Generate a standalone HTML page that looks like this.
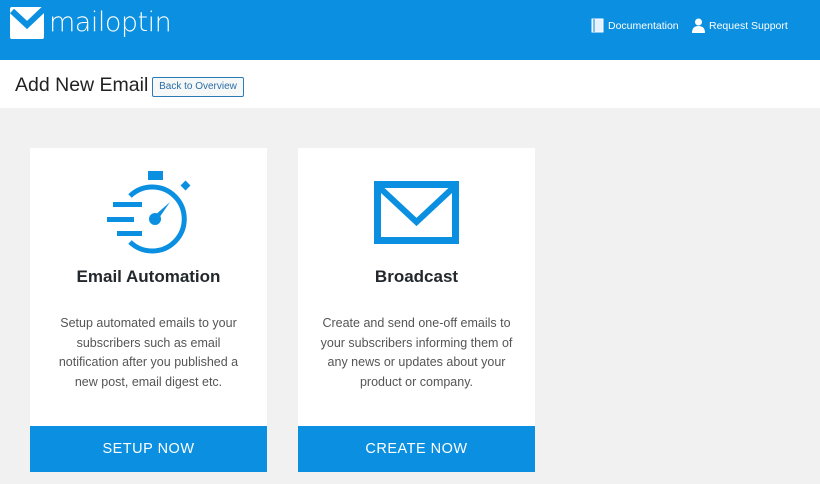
<!DOCTYPE html>
<html><head><meta charset="utf-8"><style>
*{margin:0;padding:0;box-sizing:border-box}
body{width:820px;height:484px;overflow:hidden;background:#f1f1f1;font-family:"Liberation Sans",sans-serif;position:relative}
.hdr{position:absolute;left:0;top:0;width:820px;height:60px;background:#0b8fe0}
.logo{position:absolute;left:10px;top:7px}
.logotext{position:absolute;left:49px;top:7px;color:#fff;font-size:27px;letter-spacing:-0.5px;font-family:"DejaVu Sans","Liberation Sans",sans-serif;font-weight:200}
.nav{position:absolute;top:20px;color:#fff;font-size:10.5px}
.bar{position:absolute;left:0;top:60px;width:820px;height:48px;background:#fff}
.title{position:absolute;left:15px;top:74px;font-size:19.5px;color:#222}
.back{position:absolute;left:152px;top:77px;width:92px;height:20px;border:1px solid #2b7bb9;border-radius:2px;background:#f6f7f7;color:#2b6ea8;font-size:10px;text-align:center;line-height:18px}
.card{position:absolute;top:148px;width:237px;height:324px;background:#fff;text-align:center}
.card h2{position:absolute;top:119px;width:100%;font-size:17px;font-weight:bold;color:#23282d}
.card p{position:absolute;top:166px;left:18px;right:18px;font-size:12.5px;line-height:19.5px;color:#555}
.btn{position:absolute;left:0;bottom:0;width:100%;height:46px;background:#0b8fe0;color:#fff;font-size:14.5px;line-height:46px;letter-spacing:.5px}
</style></head><body>
<div class="hdr">
<svg class="logo" width="38" height="32" viewBox="0 0 38 32"><rect x="0" y="0" width="34" height="32" rx="2" fill="#fff"/><path d="M2 4 L17 18 L36 0" stroke="#0b8fe0" stroke-width="6" fill="none"/></svg>
<div class="logotext">mailoptin</div>
<svg style="position:absolute;left:591px;top:18px" width="13" height="15" viewBox="0 0 13 15"><rect x="1" y="1" width="11" height="13" fill="#e6f2fc" stroke="#fff"/><line x1="3" y1="1" x2="3" y2="14" stroke="#0b8fe0"/></svg>
<div class="nav" style="left:608px">Documentation</div>
<svg style="position:absolute;left:692px;top:18px" width="13" height="15" viewBox="0 0 13 15"><circle cx="6.5" cy="4" r="3.5" fill="#fff"/><path d="M0 15 Q0 8 6.5 8 Q13 8 13 15Z" fill="#fff"/></svg>
<div class="nav" style="left:709px">Request Support</div>
</div>
<div class="bar"></div>
<div class="title">Add New Email</div>
<div class="back">Back to Overview</div>

<div class="card" style="left:30px">
<svg style="position:absolute;left:0;top:0" width="237" height="110" viewBox="30 148 237 110">
<rect x="148" y="171" width="15" height="9" fill="#0b8fe0"/>
<rect x="182" y="182" width="7" height="7" fill="#0b8fe0" transform="rotate(45 185.5 185.5)"/>
<path d="M130 196 A32 32 0 1 1 130 242" stroke="#0b8fe0" stroke-width="5" fill="none"/>
<rect x="113" y="202" width="29" height="5" fill="#0b8fe0"/>
<rect x="107" y="217" width="27" height="5" fill="#0b8fe0"/>
<rect x="117" y="231" width="25" height="5" fill="#0b8fe0"/>
<circle cx="155" cy="219" r="6" fill="#0b8fe0"/>
<path d="M153 217 L170 202 L157 221Z" fill="#0b8fe0"/>
</svg>
<h2>Email Automation</h2>
<p>Setup automated emails to your subscribers such as email notification after you published a new post, email digest etc.</p>
<div class="btn">SETUP NOW</div>
</div>

<div class="card" style="left:298px">
<svg style="position:absolute;left:0;top:0" width="237" height="110" viewBox="298 148 237 110">
<rect x="377.5" y="184.5" width="78" height="56" stroke="#0b8fe0" stroke-width="7" fill="none"/>
<path d="M379 187 L416.5 222 L454 187" stroke="#0b8fe0" stroke-width="6" fill="none"/>
</svg>
<h2>Broadcast</h2>
<p>Create and send one-off emails to your subscribers informing them of any news or updates about your product or company.</p>
<div class="btn">CREATE NOW</div>
</div>
</body></html>
